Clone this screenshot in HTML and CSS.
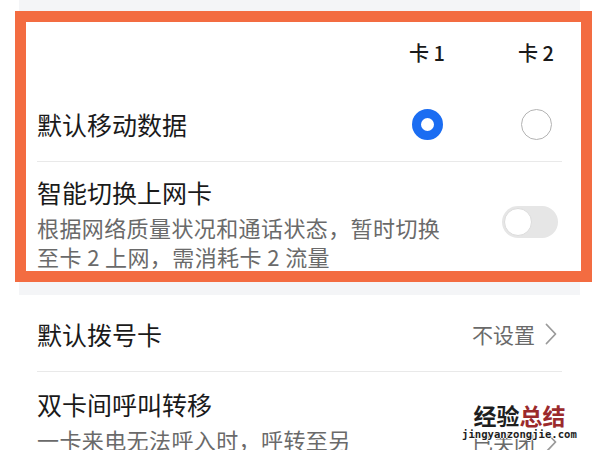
FILE: index.html
```html
<!DOCTYPE html>
<html lang="zh-CN">
<head>
<meta charset="utf-8">
<link rel="stylesheet" href="styles.css">
</head>
<body>
<div class="page">
  <div class="strip strip-top"></div>
  <section class="highlight">
    <div class="grid header">
      <div></div>
      <div class="col">卡 1</div>
      <div class="col">卡 2</div>
    </div>
    <div class="grid data-row">
      <div class="title">默认移动数据</div>
      <div class="col"><span class="radio on"></span></div>
      <div class="col"><span class="radio"></span></div>
    </div>
    <div class="switch-row">
      <div class="text">
        <div class="title">智能切换上网卡</div>
        <div class="sub">根据网络质量状况和通话状态，暂时切换<br>至卡 2 上网，需消耗卡 2 流量</div>
      </div>
      <span class="toggle"><span class="knob"></span></span>
    </div>
  </section>
  <div class="strip strip-bottom"></div>
  <div class="row row-dial">
    <div class="title">默认拨号卡</div>
    <div class="value">不设置<svg class="chev" viewBox="0 0 12 22" width="12" height="22"><polyline points="1.5,1.5 10.5,11 1.5,20.5" fill="none" stroke="#9a9a9a" stroke-width="1.8" stroke-linejoin="round" stroke-linecap="round"/></svg></div>
  </div>
  <div class="row row-forward">
    <div class="text">
      <div class="title">双卡间呼叫转移</div>
      <div class="sub">一卡来电无法呼入时，呼转至另</div>
    </div>
    <div class="value closed">已关闭<svg class="chev" viewBox="0 0 12 22" width="12" height="22"><polyline points="1.5,1.5 10.5,11 1.5,20.5" fill="none" stroke="#9a9a9a" stroke-width="1.8" stroke-linejoin="round" stroke-linecap="round"/></svg></div>
    <div class="watermark">
      <div class="wm-cn"><span class="wm-black">经验</span><span class="wm-red">总结</span></div>
      <div class="wm-en">jingyanzongjie.com</div>
    </div>
  </div>
</div>
</body>
</html>
```

FILE: styles.css
```css
html, body {
  margin: 0;
  padding: 0;
  background: #ffffff;
}
body {
  width: 600px;
  height: 450px;
  overflow: hidden;
  font-family: "Noto Sans CJK SC", "Noto Sans", sans-serif;
  color: #1a1a1a;
}
.page {
  width: 600px;
  height: 450px;
  overflow: hidden;
}
.strip {
  background: #f4f5f7;
  margin: 0 20px 0 19px;
}
.strip-top { height: 11px; }
.strip-bottom { height: 13px; }

.highlight {
  margin: 0 8px 0 15px;
  border: 11px solid #f36c41;
  height: 249px;
  overflow: hidden;
  padding-left: 11px;
  background: #ffffff;
}
.grid {
  display: grid;
  align-items: center;
}
.header {
  height: 60px;
  grid-template-columns: 1fr 60px 60px;
  column-gap: 49px;
  padding-right: 15px;
}
.header .col {
  text-align: center;
  font-size: 20px;
  font-weight: 500;
  color: #1a1a1a;
}
.col {
  display: flex;
  justify-content: center;
  align-items: center;
}
.title {
  font-size: 25px;
  line-height: 36px;
  color: #1a1a1a;
}
.data-row {
  height: 74px;
  padding-top: 5px;
  grid-template-columns: 1fr 60px 52px;
  column-gap: 53px;
  border-bottom: 1px solid #e9e9e9;
  margin-right: 19px;
}
.radio {
  display: block;
  box-sizing: border-box;
  width: 31px;
  height: 31px;
  border-radius: 50%;
  border: 1.5px solid #b3b3b3;
  background: #ffffff;
}
.radio.on {
  border: 9px solid #1b6df2;
}
.switch-row {
  display: flex;
  justify-content: space-between;
  align-items: flex-start;
  padding-top: 12px;
  margin-right: 19px;
}
.sub {
  font-size: 22px;
  line-height: 29px;
  margin-top: 3px;
  color: #6a6a6a;
  letter-spacing: 0.4px;
}
.toggle {
  display: block;
  position: relative;
  width: 56px;
  height: 32px;
  border-radius: 16px;
  background: #e6e6e6;
  margin-top: 32px;
  margin-right: 4px;
  flex: none;
}
.knob {
  position: absolute;
  left: 2px;
  top: 2px;
  width: 28px;
  height: 28px;
  box-sizing: border-box;
  border-radius: 50%;
  background: #ffffff;
  border: 1px solid #dcdcdc;
}
.row {
  display: flex;
  justify-content: space-between;
  margin: 0 38px 0 37px;
}
.row-dial {
  align-items: center;
  border-bottom: 1px solid #e9e9e9;
  padding-top: 2px;
  box-sizing: border-box;
  height: 77px;
}
.value {
  display: flex;
  align-items: center;
  gap: 10px;
  font-size: 21px;
  line-height: 30px;
  color: #6a6a6a;
  margin-right: 5px;
}
.row-forward {
  position: relative;
  padding-top: 14px;
  align-items: flex-start;
}
.row-forward .value {
  margin-top: 41px;
}
.watermark {
  position: absolute;
  left: 425px;
  top: 30px;
  text-align: center;
}
.wm-cn {
  font-size: 23px;
  font-weight: 700;
  line-height: 26px;
  text-shadow: 0 0 2px #fff, 0 0 2px #fff;
}
.wm-black { color: #1e1e1e; }
.wm-red { color: #9b2a2c; }
.wm-en {
  font-family: "DejaVu Sans Mono", monospace;
  font-size: 10.6px;
  font-weight: 700;
  line-height: 13px;
  color: #1e1e1e;
  text-shadow: 1px 0 0 #fff, -1px 0 0 #fff, 0 1px 0 #fff, 0 -1px 0 #fff;
}
```
